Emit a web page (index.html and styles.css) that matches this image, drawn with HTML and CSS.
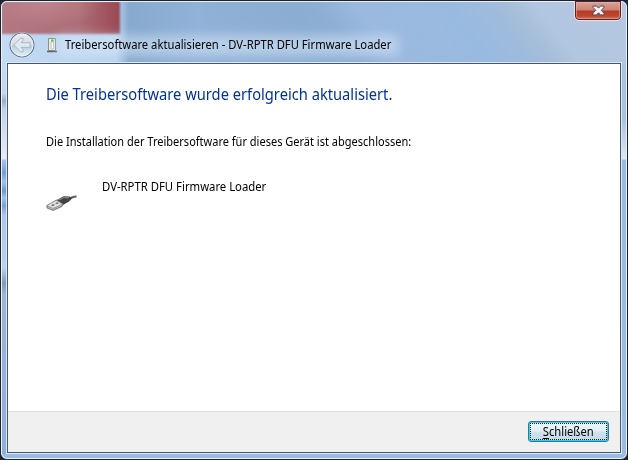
FILE: index.html
```html
<!DOCTYPE html>
<html lang="de">
<head>
<meta charset="utf-8">
<title>Treibersoftware aktualisieren</title>
<link rel="stylesheet" href="styles.css">
</head>
<body>
<main class="window">
  <div class="glass-red"></div>
  <div class="glass-left"></div>
  <div class="glass-right"></div>
  <header class="titlebar">
    <svg class="back" width="28" height="28" viewBox="0 0 28 28">
      <defs>
        <linearGradient id="orb" x1="0" y1="0" x2="0" y2="1">
          <stop offset="0" stop-color="#eeeaf0"/><stop offset=".48" stop-color="#d3deea"/>
          <stop offset=".52" stop-color="#bccddd"/><stop offset="1" stop-color="#e2f1fb"/>
        </linearGradient>
      </defs>
      <circle cx="14" cy="14" r="12.8" fill="#e8f3fc"/>
      <circle cx="14" cy="14" r="12" fill="url(#orb)" stroke="#607084" stroke-width="1.1"/>
      <circle cx="14" cy="14" r="11" fill="none" stroke="#edf5fb" stroke-width=".8"/>
      <path d="M5.800 14 12.500 7.300h2.600v2l-2 2.400h8.900v4.600h-8.900l2 2.400v2h-2.600z" fill="#dfe9f1" stroke="#a5b3bf" stroke-width=".9" stroke-linejoin="round"/>
    </svg>
    <svg class="device" width="12" height="16" viewBox="0 0 12 16">
      <path d="M2.500 1.500h7v12h-7z" fill="#eceded" stroke="#8a8d8b"/>
      <path d="M5 5h2.500v7H5z" fill="#fcfcfc" stroke="#b8bab8" stroke-width=".8"/>
      <path d="M5 2.500h2.800v2.300H5z" fill="#63c92a"/>
      <path d="M1 14.500h10" stroke="#555b62" stroke-width="1.300"/>
    </svg>
    <h1 class="caption"><span>Treibersoftware aktualisieren - DV-RPTR DFU Firmware Loader</span></h1>
  </header>
  <button class="close" aria-label="Schließen">
    <svg width="13" height="11" viewBox="0 0 13 11">
      <path d="M1 1h3.500l2 2.100L8.500 1H12v1.500L9.200 5.300 12 8.200V10H8.500l-2-2.200-2 2.200H1V8.200l2.800-2.900L1 2.500z" fill="#f5f5f5" stroke="#534858" stroke-width="1" stroke-linejoin="round"/>
    </svg>
  </button>
  <section class="client">
    <div class="content">
      <h2 class="headline"><span>Die Treibersoftware wurde erfolgreich aktualisiert.</span></h2>
      <p class="message"><span>Die Installation der Treibersoftware für dieses Gerät ist abgeschlossen:</span></p>
      <div class="item">
        <svg class="usb" width="32" height="18" viewBox="0 0 32 18">
          <path d="M22 5c3-.5 5-2.600 8.500-2.500" fill="none" stroke="#5b5b60" stroke-width="2.200"/>
          <path d="M11 6 17.500 2.200 23.500 2.400 26 4.600 23 7.500 17 11z" fill="#424247"/>
          <path d="M13 6 18 3.300 23 3.800" fill="none" stroke="#85858b" stroke-width="1.200"/>
          <path d="M.8 11.500 10.500 6 17 9.800 16 12.500 7.200 16.500 1 14z" fill="#8c8d90" stroke="#66676b" stroke-width=".7"/>
          <path d="M1.500 11.600 10.200 6.700 16 9.900 7 14z" fill="#e4e5e6"/>
          <path d="M5 11.300 7.200 10.100 9 11.100 6.800 12.200zM9 9.200 11 8.200 12.900 9.200 10.800 10.300z" fill="#6c6e72"/>
          <path d="M1.500 13 7 15.300 15.500 11.400" fill="none" stroke="#c5c6c8" stroke-width=".8"/>
        </svg>
        <p class="device-name"><span>DV-RPTR DFU Firmware Loader</span></p>
      </div>
    </div>
    <footer class="footer">
      <button class="primary"><span><u>S</u>chließen</span></button>
    </footer>
  </section>
</main>
</body>
</html>
```
FILE: styles.css
```css
* { box-sizing: border-box; }
body {
  margin: 0;
  background: #20222e;
  font-family: "Noto Sans", "Open Sans", sans-serif;
  font-size: 12px;
  color: #000;
}
h1, h2, p { margin: 0; font-weight: 400; white-space: nowrap; }
h1 span, h2 span, p span { display: inline-block; transform-origin: 0 50%; }
.window {
  position: relative;
  width: 628px;
  height: 460px;
  padding: 0 6px 6px;
  display: flex;
  flex-direction: column;
  overflow: hidden;
  border: 1px solid #1c202d;
  border-radius: 7px;
  background:
    linear-gradient(52deg, #92b3d9 0, #8badd1 28%, #8dafd4 34%, #9bb9df 42%, #99bae0 62%, #9fbbdc 70%, #a5bdd9 74%, #b1c6e0 80%, #b5c8e1 100%) 200px 0 / 426px 64px no-repeat,
    linear-gradient(90deg, #c2daf3 0, #b9d4f0 115px, #86a9cd 128px, #92b3d9 200px) 0 0 / 100% 64px no-repeat,
    #9bbce1;
}
.window::after {
  content: "";
  position: absolute;
  inset: 0;
  border: 1px solid #e9f2fa;
  border-radius: 6px;
  pointer-events: none;
}
.glass-red {
  position: absolute;
  left: 0;
  top: 0;
  width: 119px;
  height: 33px;
  background: radial-gradient(ellipse at 35% 10%, #c48b93aa, transparent 55%), linear-gradient(90deg, #b27882, #ad6e78 65%, #9a4854);
  filter: blur(1px);
}
.glass-left, .glass-right { position: absolute; top: 62px; bottom: 5px; width: 6px; }
.glass-left {
  left: 0;
  background: linear-gradient(#c2daf3 0, #c2d8ee 30px, #9badc8 38px, #bfd2ea 46px, #e6edf5 96px, #a7c5e9 97px, #769fd2 110px, #9fc2ea 119px, #7198cb 128px, #a1c1e7 135px, #7d9fcf 143px, #a7c7ec 152px, #b8d2ee 205px, #7e9bbb 220px, #9ab6d8 232px, #8eafd5 100%);
}
.glass-right {
  right: 0;
  background: linear-gradient(#aec4df 0, #a9c1df 55px, #dae5f1 94px, #e2eaf3 96px, #9abce2 97px, #98bbe3 100%);
}
.titlebar {
  position: relative;
  height: 62px;
  padding: 28px 0 0 1px;
  display: flex;
  align-items: center;
}
.back { flex: none; margin-top: -3px; }
.device { flex: none; margin: -3px 0 0 10px; }
.caption {
  position: relative;
  height: 20px;
  line-height: 20px;
  margin: -2px 0 0 7px;
  font-size: 12px;
}
.caption::before {
  content: "";
  position: absolute;
  inset: 1px 16px 0 -8px;
  background: #d9e8f899;
  filter: blur(6px);
}
.caption span { position: relative; transform: scaleX(.936); }
.close {
  position: absolute;
  right: 5px;
  top: -1px;
  z-index: 2;
  width: 48px;
  height: 21px;
  padding: 0;
  display: flex;
  align-items: center;
  justify-content: center;
  border: 1px solid #f1dfe0;
  border-radius: 0 0 5px 5px;
  background: linear-gradient(#dba59b 0, #cc8274 48%, #b73a25 52%, #bb4730 78%, #d37b5f 100%);
  box-shadow: inset 0 0 0 1px #56232a, inset 0 0 0 2px #efb4a988;
}
.client {
  position: relative;
  width: 614px;
  height: 390px;
  display: flex;
  flex-direction: column;
  border: 1px solid #48566a;
  background: #fff;
  box-shadow: 0 0 0 1px #dceaf7;
}
.content { flex: 1; padding: 19px 38px 0; }
.headline { height: 22px; line-height: 22px; font-size: 16px; color: #003399; }
.headline span { transform: scaleX(.918); }
.message { height: 16px; line-height: 16px; margin-top: 29px; }
.message span { transform: scaleX(.918); }
.item { display: flex; margin-top: 28px; height: 40px; }
.usb { margin-top: 16px; }
.device-name { height: 18px; line-height: 18px; margin-left: 24px; }
.device-name span { transform: scaleX(.943); }
.footer {
  height: 41px;
  padding: 9px 11px 0;
  display: flex;
  justify-content: flex-end;
  border-top: 1px solid #dfdfdf;
  background: #f0f0f0;
}
.primary {
  position: relative;
  width: 81px;
  height: 21px;
  padding: 0;
  font: 12px/17px "Noto Sans", "Open Sans", sans-serif;
  color: #000;
  border: 1px solid #32768f;
  border-radius: 3px;
  background: linear-gradient(#edf5f9 0, #e3eff5 48%, #cfe2ec 52%, #c2dae7 100%);
  box-shadow: inset 0 0 0 1px #36cdf5;
}
.primary::after { content: ""; position: absolute; inset: 1px; border: 1px dotted #222; }
.primary span { display: inline-block; transform: scaleX(.935); }
.primary u { text-underline-offset: 2px; }
```
